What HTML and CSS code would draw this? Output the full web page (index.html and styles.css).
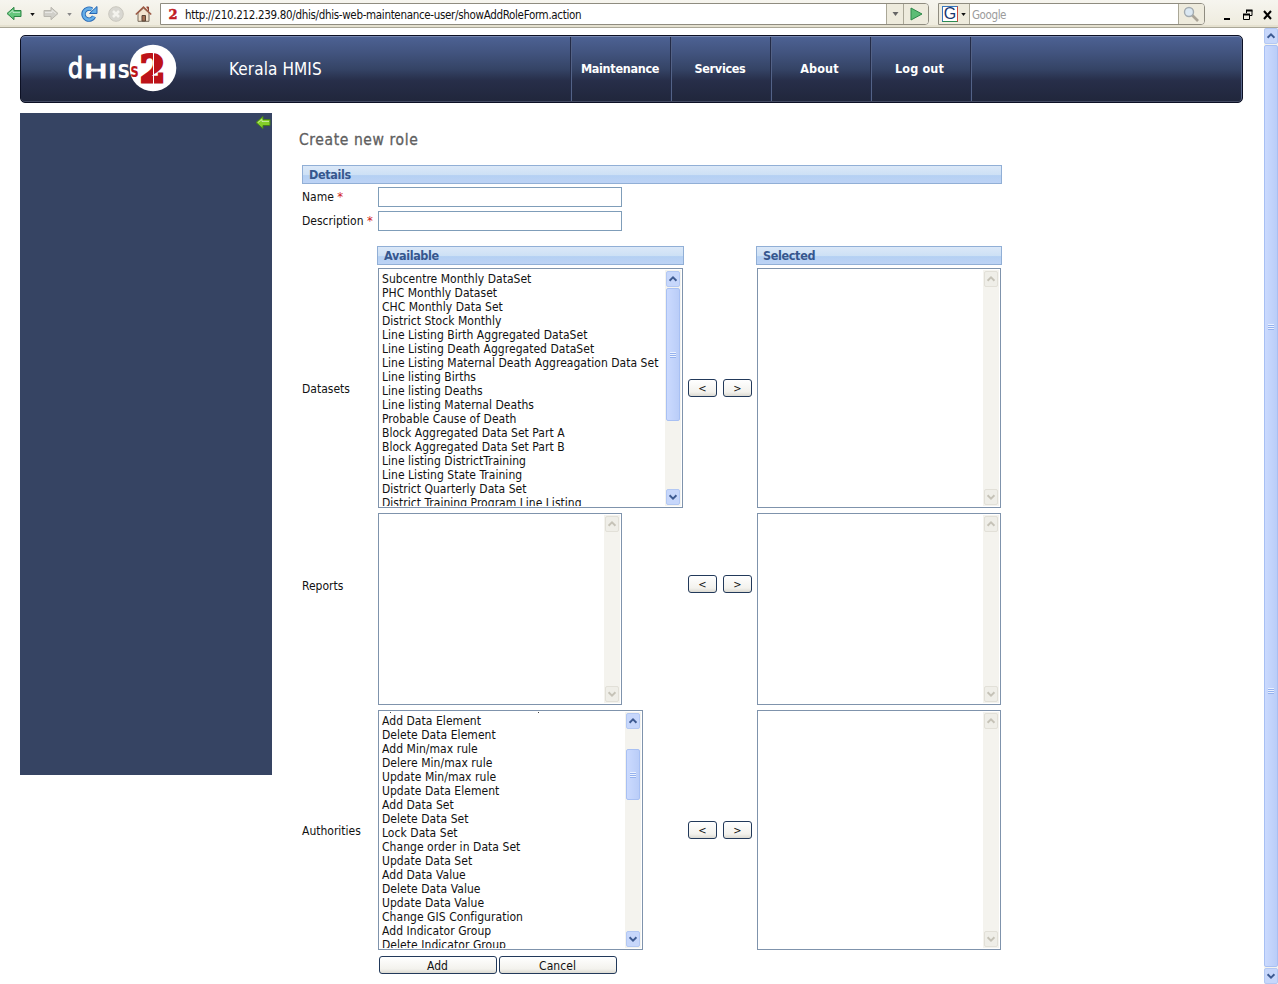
FILE: index.html
```html
<!DOCTYPE html>
<html lang="en">
<head>
<meta charset="utf-8">
<title>Create new role</title>
<link rel="stylesheet" href="styles.css">
</head>
<body>
<svg class="defs" width="0" height="0" aria-hidden="true">
  <symbol id="up" viewBox="0 0 14 14"><path d="M3 9 7 5l4 4" fill="none" stroke="currentColor" stroke-width="2.2"/></symbol>
  <symbol id="down" viewBox="0 0 14 14"><path d="M3 5l4 4 4-4" fill="none" stroke="currentColor" stroke-width="2.2"/></symbol>
  <symbol id="tri" viewBox="0 0 6 4"><path d="M0 0h6L3 4z" fill="currentColor"/></symbol>
  <symbol id="left" viewBox="0 0 16 14"><path d="M1 7 8 .8V4h7v6H8v3.2z" fill="currentColor" stroke="var(--edge)"/><path d="M3 7l4-3v2h7" fill="none" stroke="#fff" stroke-opacity=".5"/></symbol>
</svg>
<header class="toolbar">
  <nav class="tools">
    <svg class="back" width="16" height="15" viewBox="0 0 16 14"><use href="#left"/></svg>
    <svg class="caret c1" width="5" height="3"><use href="#tri"/></svg>
    <svg class="forward" width="16" height="15" viewBox="0 0 16 14"><use href="#left"/></svg>
    <svg class="caret c2" width="5" height="3"><use href="#tri"/></svg>
    <svg class="reload" width="17" height="16" viewBox="0 0 17 16"><path d="M13 10.5A5.5 5.5 0 1 1 11 3.5" fill="none" stroke="#2767b4" stroke-width="4.4"/><path d="M13 10.5A5.5 5.5 0 1 1 11 3.5" fill="none" stroke="#65aee8" stroke-width="2.6"/><path d="M8.500 7.500H16V.5z" fill="#65aee8" stroke="#2767b4"/></svg>
    <svg class="stop" width="16" height="16" viewBox="0 0 16 16"><circle cx="8" cy="8" r="7.300" fill="#d8d7d1" stroke="#c9c7be"/><path d="M5 5l6 6M11 5l-6 6" stroke="#f4f3ee" stroke-width="2.500"/></svg>
    <svg class="home" width="17" height="16" viewBox="0 0 17 16"><path d="M3 7v8.300h11V7L8.500 2z" fill="#f3e4cf" stroke="#776b5c"/><path d="M11.500 1h2v4" fill="#b24a31" stroke="#8b4638"/><path d="M.8 8.500 8.500 1.200l7.700 7.300" fill="none" stroke="#9c5a45" stroke-width="1.600"/><path d="M7 15V9.500h3.500V15z" fill="#a46f52" stroke="#594638"/></svg>
  </nav>
  <div class="address">
    <b class="favicon">2</b><span class="url">http://210.212.239.80/dhis/dhis-web-maintenance-user/showAddRoleForm.action</span>
    <span class="drop"><svg width="7" height="4"><use href="#tri"/></svg></span>
    <span class="go"><svg width="13" height="14" viewBox="0 0 13 14"><path d="M1 1l11 6L1 13z" fill="#5cbd75" stroke="#2c8749"/></svg></span>
  </div>
  <div class="search">
    <span class="engine"><b>G</b><svg width="5" height="3"><use href="#tri"/></svg></span>
    <span class="hint">Google</span>
    <span class="find"><svg width="17" height="16" viewBox="0 0 17 16"><path d="M8.500 8.500 15 15" stroke="#aaa497" stroke-width="2.600"/><circle cx="6" cy="6" r="4.500" fill="#dbe8f2" stroke="#a3abb0" stroke-width="1.400"/></svg></span>
  </div>
  <svg class="winctl" width="50" height="14" viewBox="0 0 50 14"><path d="M2 11h6" stroke="#000" stroke-width="2"/><path d="M24.500 5V2.500h5.500v5h-2M21.500 6.500h6v5h-6z" fill="none" stroke="#000"/><path d="M24 2.500h6.500M21 6.500h7" stroke="#000" stroke-width="2"/><path d="M42 3l7 8M49 3l-7 8" stroke="#000" stroke-width="2"/></svg>
</header>
<div class="viewport">
  <div class="page">
    <div class="banner">
      <svg class="logo" width="110" height="50" viewBox="0 0 110 50"><circle cx="85" cy="25" r="23.300" fill="#fff"/><text x="0" y="35" class="dee" textLength="15" lengthAdjust="spacingAndGlyphs">d</text><text x="16" y="34.500" class="word" textLength="33" lengthAdjust="spacingAndGlyphs">HI</text><text x="49.500" y="34.500" class="ess" textLength="12.500" lengthAdjust="spacingAndGlyphs">S</text><text x="62.500" y="34" class="ess red" textLength="8" lengthAdjust="spacingAndGlyphs">s</text><text x="72" y="39" class="two" textLength="25" lengthAdjust="spacingAndGlyphs">2</text><path d="M85.500 8v34" stroke="#fff"/></svg>
      <div class="site">Kerala HMIS</div>
      <nav class="menu"><a>Maintenance</a><a>Services</a><a class="loose">About</a><a class="loose">Log out</a></nav>
    </div>
    <div class="body">
      <aside class="side"><svg width="16" height="15" viewBox="0 0 16 14"><use href="#left"/></svg></aside>
      <main class="content">
        <h1>Create new role</h1>
        <form class="form">
          <div class="bar details">Details</div>
          <label class="lbl">Name <i>*</i></label><div class="input"></div>
          <label class="lbl">Description <i>*</i></label><div class="input"></div>
          <div class="bar avail">Available</div><div class="bar sel">Selected</div>

          <label class="lbl mid">Datasets</label>
          <div class="list wide">
            <ul><li>Subcentre Monthly DataSet</li><li>PHC Monthly Dataset</li><li>CHC Monthly Data Set</li><li>District Stock Monthly</li><li>Line Listing Birth Aggregated DataSet</li><li>Line Listing Death Aggregated DataSet</li><li>Line Listing Maternal Death Aggreagation Data Set</li><li>Line listing Births</li><li>Line listing Deaths</li><li>Line listing Maternal Deaths</li><li>Probable Cause of Death</li><li>Block Aggregated Data Set Part A</li><li>Block Aggregated Data Set Part B</li><li>Line listing DistrictTraining</li><li>Line Listing State Training</li><li>District Quarterly Data Set</li><li>District Training Program Line Listing</li></ul>
            <div class="sb"><svg><use href="#up"/></svg><div class="track"><div class="thumb t1"></div></div><svg><use href="#down"/></svg></div>
          </div>
          <div class="move"><span class="btn">&lt;</span><span class="btn">&gt;</span></div>
          <div class="list"><ul></ul><div class="sb off"><svg><use href="#up"/></svg><div class="track"></div><svg><use href="#down"/></svg></div></div>

          <label class="lbl mid raised">Reports</label>
          <div class="list"><ul></ul><div class="sb off"><svg><use href="#up"/></svg><div class="track"></div><svg><use href="#down"/></svg></div></div>
          <div class="move raised"><span class="btn">&lt;</span><span class="btn">&gt;</span></div>
          <div class="list"><ul></ul><div class="sb off"><svg><use href="#up"/></svg><div class="track"></div><svg><use href="#down"/></svg></div></div>

          <label class="lbl mid">Authorities</label>
          <div class="list third">
            <ul class="clipped"><li>Add Data Element</li><li>Delete Data Element</li><li>Add Min/max rule</li><li>Delere Min/max rule</li><li>Update Min/max rule</li><li>Update Data Element</li><li>Add Data Set</li><li>Delete Data Set</li><li>Lock Data Set</li><li>Change order in Data Set</li><li>Update Data Set</li><li>Add Data Value</li><li>Delete Data Value</li><li>Update Data Value</li><li>Change GIS Configuration</li><li>Add Indicator Group</li><li>Delete Indicator Group</li></ul>
            <div class="sb"><svg><use href="#up"/></svg><div class="track"><div class="thumb t2"></div></div><svg><use href="#down"/></svg></div>
          </div>
          <div class="move"><span class="btn">&lt;</span><span class="btn">&gt;</span></div>
          <div class="list last"><ul></ul><div class="sb off"><svg><use href="#up"/></svg><div class="track"></div><svg><use href="#down"/></svg></div></div>
          <div class="actions"><span class="btn">Add</span><span class="btn">Cancel</span></div>
        </form>
      </main>
    </div>
  </div>
  <div class="sb pagebar"><svg><use href="#up"/></svg><div class="track"><div class="thumb tall"></div></div><svg><use href="#down"/></svg></div>
</div>
</body>
</html>
```
FILE: styles.css
```css
* { box-sizing: border-box; }
body { margin: 0; height: 984px; overflow: hidden; background: #fff; color: #111; font: 12px/14px "DejaVu Sans Condensed", "DejaVu Sans", sans-serif; font-stretch: condensed; letter-spacing: .05px; }
svg { display: block; flex: none; }
.defs { position: absolute; }

/* Browser toolbar */
.toolbar { display: flex; height: 28px; padding-top: 3px; background: linear-gradient(#f6f5ef, #eeebdd); border-bottom: 1px solid #aaa797; box-shadow: inset 0 -2px #e5e1d0; }
.tools { display: flex; width: 160px; padding: 3px 0 0 6px; }
.tools .back { color: #65c67c; --edge: #2d8545; }
.tools .caret { margin-top: 7px; }
.tools .c1 { margin-left: 8px; }
.tools .forward { margin-left: 8px; color: #d0cfc9; --edge: #b8b6ae; transform: scaleX(-1); }
.tools .c2 { margin-left: 8px; color: #888; }
.tools .reload { margin-left: 9px; }
.tools .stop { margin-left: 10px; }
.tools .home { margin-left: 11px; }
.address, .search { display: flex; height: 22px; border: 1px solid #8f8c80; background: #fff; align-items: center; }
.address { width: 769px; border-radius: 0 4px 4px 0; overflow: hidden; }
.favicon { width: 24px; text-align: center; color: #c11a22; font: bold 13px "DejaVu Serif", serif; -webkit-text-stroke: .5px #c11a22; }
.url { flex: 1; padding-top: 1px; font-size: 11.500px; letter-spacing: -.32px; }
.drop, .go, .find, .engine { display: flex; align-items: center; justify-content: center; height: 20px; background: #eeebdd; }
.drop { width: 17px; border-left: 1px solid #aaa797; color: #666; }
.go { width: 25px; border-left: 1px solid #aaa797; }
.search { margin-left: 9px; width: 267px; border-radius: 0 4px 4px 0; overflow: hidden; }
.engine { width: 31px; gap: 3px; border-right: 1px solid #aaa797; }
.engine b { width: 16px; height: 16px; border: 1px solid #3876bd; border-right-color: #cf4a3d; border-bottom-color: #2c8b52; background: #fff; color: #17366f; font: 16px/14px "Liberation Sans", sans-serif; text-align: center; }
.hint { flex: 1; padding: 1px 0 0 2px; color: #9b9b9b; font-size: 11.500px; letter-spacing: -.4px; }
.find { width: 26px; border-left: 1px solid #aaa797; }
.winctl { margin: 5px 0 0 17px; }

/* Page frame */
.viewport { display: flex; height: 956px; }
.page { flex: 1; padding: 7px 21px 0 20px; }
.banner { display: flex; width: 1223px; height: 68px; border: 1px solid #0c1024; border-radius: 5px; background: linear-gradient(#4d6294, #42547f 25%, #354466 50%, #272e49 68%, #20263b); box-shadow: inset 0 1px #7888b0, inset 0 -1px #444b62, inset -1px 0 #59678b; }
.logo { margin: 7px 0 0 47px; letter-spacing: 0; }
.dee { font: 28px "DejaVu Sans", sans-serif; fill: #fff; stroke: #fff; stroke-width: 1.2; }
.word { font: 20px "DejaVu Sans", sans-serif; fill: #fff; stroke: #fff; stroke-width: 1; }
.ess { font: bold 20px "DejaVu Sans", sans-serif; fill: #fff; }
.red { fill: #bd1319; }
.two { font: bold 38px "DejaVu Serif", serif; fill: #bd1319; stroke: #bd1319; stroke-width: 3; }
.site { width: 392px; padding-left: 51px; color: #fff; font-size: 17px; line-height: 67px; letter-spacing: .1px; }
.menu { display: flex; margin-top: 1px; height: 64px; border-right: 1px solid #232b47; box-shadow: 1px 0 #536287; }
.menu a { width: 100px; padding-right: 1px; border-left: 1px solid #232b47; box-shadow: inset 1px 0 #536287; color: #fff; text-align: center; font-weight: bold; font-size: 12.500px; line-height: 64px; letter-spacing: -.3px; }
.menu .loose { padding-right: 2px; letter-spacing: .15px; }
.body { display: flex; margin-top: 10px; }
.side { width: 252px; height: 662px; background: #364463; padding: 2px 1px 0 0; color: #84cf28; --edge: #467c1c; }
.side svg { margin-left: auto; }
.content { padding: 17px 0 0 27px; }
h1 { margin: 0; height: 35px; color: #606060; font-size: 15.500px; line-height: 20px; font-weight: normal; letter-spacing: .6px; -webkit-text-stroke: .3px #606060; }

/* Role form */
.form { display: grid; margin-left: 3px; grid-template-columns: 76px 310px 69px 245px; grid-template-rows: 22px 24px 35px 22px 245px 197px 246px 19px; }
.bar { height: 19px; padding-left: 6px; border: 1px solid #91afd6; background: linear-gradient(#dbe8f8, #cce0f5 55%, #b4d0f3 56%, #bdd3f5); color: #36578e; font-weight: bold; font-size: 12.500px; line-height: 18px; letter-spacing: -.35px; }
.details { grid-column: 1 / -1; }
.avail { grid-column: 2; width: 307px; margin-left: -1px; }
.sel { grid-column: 4; margin-left: -1px; }
.lbl { grid-column: 1; padding-top: 3px; white-space: nowrap; letter-spacing: 0; }
.lbl i { color: #d01818; font-style: normal; font-size: 13px; }
.mid { align-self: center; padding: 0 0 4px; }
.input { grid-column: 2 / -1; width: 244px; height: 20px; border: 1px solid #7f9db9; background: #fff; }
.list { display: flex; width: 244px; margin-bottom: 5px; border: 1px solid #7f93ac; padding: 1px; background: #fff; overflow: hidden; min-height: 0; }
.wide { width: 305px; letter-spacing: .03px; }
.third { width: 265px; }
.third, .last { margin-bottom: 6px; }
.list ul { flex: 1; height: 100%; margin: 0; padding: 2px 0 0 2px; list-style: none; white-space: nowrap; overflow: hidden; }
.clipped { background: linear-gradient(#444, #444) 10px 0 / 1px 1px no-repeat, linear-gradient(#444, #444) 158px 0 / 1px 1px no-repeat; }
.move { display: flex; gap: 6px; align-self: center; margin-bottom: 6px; }
.lbl.raised { padding-bottom: 51px; }
.move.raised { margin-bottom: 55px; }
.btn { display: block; height: 18px; border: 1px solid #22395a; border-radius: 3px; background: linear-gradient(#fff, #f3f2ed 75%, #dcdad2); text-align: center; line-height: 18px; }
.move .btn { width: 29px; font-size: 11px; }
.actions { grid-column: 2; display: flex; gap: 2px; padding-left: 1px; }
.actions .btn { width: 118px; padding-right: 1px; }

/* Scroll bars */
.sb { display: flex; flex-direction: column; width: 16px; padding: 1px; background: #f4f3ee; color: #3d5a91; }
.sb svg { width: 14px; height: 16px; border: 1px solid #b3c8f3; border-radius: 2px; background: #c7d7fb; }
.track { flex: 1; padding-top: 1px; }
.thumb { --grip: repeating-linear-gradient(#eaf1ff 0 1px, #94b1ee 1px 2px); border: 1px solid #a8c0f3; border-radius: 2px; background: var(--grip) center / 6px 6px no-repeat, linear-gradient(90deg, #cbdafe, #bacdf8); }
.t1 { height: 133px; }
.t2 { height: 51px; margin-top: 19px; }
.off { color: #c5c2b7; }
.off svg { border-color: #e2e0d8; background: #efeee8; }
.pagebar { width: 14px; padding: 0; }
.pagebar .track { padding: 1px 0; }
.tall { height: 100%; background: var(--grip) center 278px / 6px 6px no-repeat, var(--grip) center 642px / 6px 6px no-repeat, linear-gradient(90deg, #cbdafe, #bacdf8); }
```
